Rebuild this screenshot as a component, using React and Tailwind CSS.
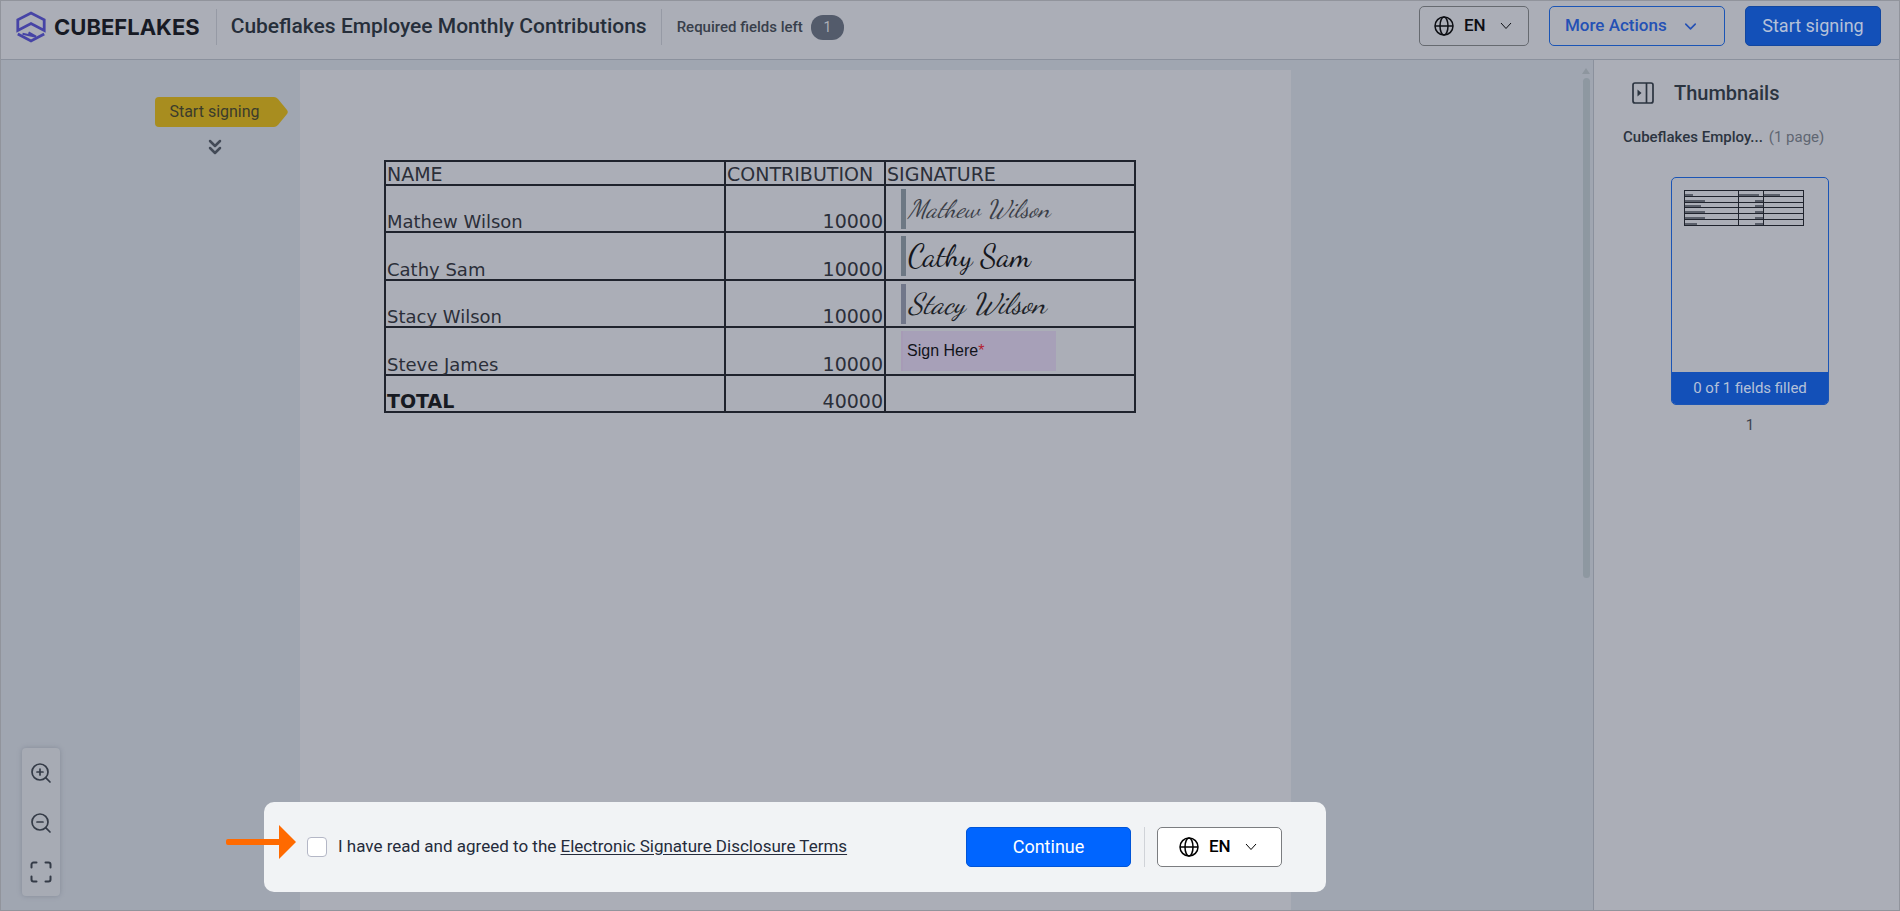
import { useState } from "react";
import { ChevronDown, ChevronsDown, ZoomIn, ZoomOut } from "lucide-react";

const rows = [
    { name: "Mathew Wilson", amount: 10000, sign: "Mathew Wilson", bar: "bg-[#6d7884]", font: "italic text-[25px] text-[#3a3d46]" },
    { name: "Cathy Sam", amount: 10000, sign: "Cathy Sam", bar: "bg-[#6d7884]", font: "text-[31px] text-[#14161c]" },
    { name: "Stacy Wilson", amount: 10000, sign: "Stacy Wilson", bar: "bg-[#71778a]", font: "italic text-[29px] text-[#1c1f26]" },
    { name: "Steve James", amount: 10000 },
];

const Logo = () => (
    <a href="#" className="flex items-center gap-2 text-[#171a24]">
        <svg width="30" height="32" viewBox="0 0 30 32" fill="none" stroke="#4644a6" strokeWidth="2.800">
            <path d="M1.800 19.500V8.800L15 2l13.200 6.800V19.500L15 12.500Z" />
            <path d="M1.800 23 15 30l13.200-7" />
            <path d="M6.500 22.800 20 25.800 12.500 21.500" strokeWidth="2.200" />
        </svg>
        <span className="font-['Inter',sans-serif] text-[22px] leading-8 font-bold">CUBEFLAKES</span>
    </a>
);

const Globe = () => (
    <svg width="20" height="20" viewBox="0 0 20 20" fill="none" stroke="currentColor" strokeWidth="1.5">
        <circle cx="10" cy="10" r="9" />
        <ellipse cx="10" cy="10" rx="4" ry="9" />
        <path d="M1 10h18" />
    </svg>
);

const LanguageButton = ({ className }) => (
    <button type="button" className={`flex h-10 items-center rounded-[5px] border text-[17px] font-medium ${className}`}>
        <Globe />
        <span className="ml-2.5">EN</span>
        <svg className="ml-3.5" width="12" height="8" viewBox="0 0 12 8" fill="none" stroke="currentColor" strokeWidth="1">
            <path d="m1 1 5 5.500L11 1" />
        </svg>
    </button>
);

const Header = () => (
    <header className="flex h-[59px] shrink-0 items-start justify-between border-b border-[#8b919d] bg-[#abaeb7] pt-[5px] pr-[18px] pl-[15px]">
        <div className="flex h-[42px] items-center">
            <Logo />
            <span className="ml-4 h-9 w-px bg-[#969aa5]" />
            <h1 className="ml-3.5 text-[21px] font-medium whitespace-nowrap text-[#262e3a]">
                Cubeflakes Employee Monthly Contributions
            </h1>
            <span className="ml-3.5 h-9 w-px bg-[#969aa5]" />
            <span className="ml-[15px] text-[15px] font-medium whitespace-nowrap text-[#383f4b]">Required fields left</span>
            <span className="ml-2 flex h-[25px] w-[33px] items-center justify-center rounded-xl bg-[#535b6b] text-sm text-[#abaeb7]">1</span>
        </div>

        <div className="flex gap-5">
            <LanguageButton className="w-[110px] border-[#666a70] pl-3.5 text-[#0d0f14]" />
            <button type="button" className="flex h-10 w-44 items-center rounded-[5px] border border-[#1b55b5] pl-[15px] text-[17px] font-medium text-[#2451b5]">
                More Actions
                <ChevronDown className="ml-3.5" size={19} strokeWidth={2} />
            </button>
            <button type="button" className="h-10 w-[136px] rounded-[5px] border border-[#1247a0] bg-[#1350b8] text-lg text-[#b5c1d8]">
                Start signing
            </button>
        </div>
    </header>
);

const ZoomTools = () => (
    <div className="ml-[21px] flex h-[148px] w-[38px] flex-col items-center justify-around rounded bg-[#a7abb4] text-[#343b47] shadow-[0_0_5px_#848b98]">
        <button type="button" aria-label="Zoom in"><ZoomIn size={24} strokeWidth={1.700} /></button>
        <button type="button" aria-label="Zoom out"><ZoomOut size={24} strokeWidth={1.700} /></button>
        <button type="button" aria-label="Fit to page">
            <svg width="22" height="22" viewBox="0 0 22 22" fill="none" stroke="currentColor" strokeWidth="2" strokeLinecap="round">
                <path d="M1.500 6.500v-3a2 2 0 0 1 2-2h3M15.500 1.500h3a2 2 0 0 1 2 2v3M20.500 15.500v3a2 2 0 0 1-2 2h-3M6.500 20.500h-3a2 2 0 0 1-2-2v-3" />
            </svg>
        </button>
    </div>
);

const SignatureCell = ({ row }) => {
    if (row.sign) {
        return (
            <div className="ml-[15px] flex h-10 items-center gap-0.5">
                <span className={`h-10 w-[5px] ${row.bar}`} />
                <span className={`font-['Dancing_Script','Liberation_Serif',cursive] leading-8 whitespace-nowrap ${row.font}`}>
                    {row.sign}
                </span>
            </div>
        );
    }
    return (
        <button type="button" className="ml-[15px] flex h-10 w-[155px] items-center border-l-2 border-[#a79bb6] bg-[#a7a0b8] pl-1 font-['Liberation_Sans',sans-serif] text-base text-[#11131a]">
            Sign Here<span className="text-[#b3202e]">*</span>
        </button>
    );
};

const ContributionTable = () => (
    <table className="w-full table-fixed border-collapse font-['DejaVu_Sans',sans-serif] text-[19px] leading-[19px] text-[#2b2f39]">
        <colgroup>
            <col className="w-[340px]" />
            <col className="w-40" />
            <col />
        </colgroup>
        <thead>
            <tr className="h-6 text-left">
                <th className="border-2 border-[#1f232d] px-px py-0 align-bottom font-normal">NAME</th>
                <th className="border-2 border-[#1f232d] px-px py-0 align-bottom font-normal">CONTRIBUTION</th>
                <th className="border-2 border-[#1f232d] px-px py-0 align-bottom font-normal">SIGNATURE</th>
            </tr>
        </thead>
        <tbody>
            {rows.map((row) => (
                <tr key={row.name} className="odd:h-[47px] even:h-12">
                    <td className="border-2 border-[#1f232d] px-px py-0 align-bottom text-lg leading-[19px]">{row.name}</td>
                    <td className="border-2 border-[#1f232d] px-px py-0 text-right align-bottom">{row.amount}</td>
                    <td className="border-2 border-[#1f232d] p-0 align-middle"><SignatureCell row={row} /></td>
                </tr>
            ))}
            <tr className="h-[37px]">
                <td className="border-2 border-[#1f232d] px-px py-0 align-bottom font-bold text-[#171a22]">TOTAL</td>
                <td className="border-2 border-[#1f232d] px-px py-0 text-right align-bottom">40000</td>
                <td className="border-2 border-[#1f232d] p-0" />
            </tr>
        </tbody>
    </table>
);

const ConsentBar = () => {
    const [agreed, setAgreed] = useState(false);

    return (
        <div className="absolute right-[267px] bottom-[18px] left-[263px] flex h-[90px] items-center justify-between rounded-[10px] bg-[#f1f3f5] pr-11 pl-[43px]">
            <svg className="absolute top-[23px] -left-[38px]" width="70" height="34" viewBox="0 0 70 34" fill="#ff6a00">
                <rect y="14" width="56" height="6" rx="2" />
                <path d="M53 0 70 17 53 34Z" />
            </svg>

            <div className="flex items-center text-[17px] text-[#252b3b]">
                <input
                    id="agree"
                    type="checkbox"
                    checked={agreed}
                    onChange={(e) => setAgreed(e.target.checked)}
                    className="size-5 appearance-none rounded border border-[#b4b7c6] bg-white checked:bg-[#0065ff]"
                />
                <label htmlFor="agree" className="ml-[11px] whitespace-pre">I have read and agreed to the </label>
                <a href="#" className="whitespace-nowrap underline underline-offset-2">Electronic Signature Disclosure Terms</a>
            </div>

            <div className="flex items-center">
                <button type="button" className="h-10 w-[165px] rounded-[5px] border border-[#0055d8] bg-[#0065ff] text-lg text-white">
                    Continue
                </button>
                <span className="ml-[13px] h-10 w-px bg-[#d0d3d8]" />
                <LanguageButton className="ml-3 w-[125px] border-[#7b7d80] bg-white pl-[21px] text-black" />
            </div>
        </div>
    );
};

// text marks in the small page preview, one row per table line
const preview = [
    ["w-2", "w-5", "w-4"],
    ["w-5", "w-2", ""],
    ["w-4", "w-2", ""],
    ["w-5", "w-2", ""],
    ["w-5", "w-2", ""],
    ["w-3", "w-2", ""],
];

const Thumbnails = () => (
    <aside className="flex w-[306px] shrink-0 flex-col border-l border-[#8b919d] bg-[#abaeb7]">
        <div className="mt-[19px] ml-[38px] flex items-center">
            <button type="button" aria-label="Hide thumbnails" className="text-[#2b3440]">
                <svg width="22" height="22" viewBox="0 0 22 22" fill="none" stroke="currentColor" strokeWidth="1.700">
                    <rect x="1" y="1" width="20" height="20" rx="2" />
                    <path d="M14.500 1v20" />
                    <path d="M5.500 7.500 9.500 11l-4 3.500Z" fill="currentColor" stroke="none" />
                </svg>
            </button>
            <h2 className="ml-5 text-xl leading-7 font-medium text-[#2b3440]">Thumbnails</h2>
        </div>

        <p className="mt-[18px] ml-[29px] flex gap-1.5 text-[15px] leading-6 text-[#5f6672]">
            <span className="font-medium whitespace-nowrap text-[#2b3440]">Cubeflakes Employ...</span>
            <span>(1 page)</span>
        </p>

        <button type="button" className="mt-7 mr-[70px] flex h-[228px] w-[158px] flex-col justify-between self-end overflow-hidden rounded-[5px] border border-[#1b55b5]">
            <span className="mt-3 ml-3 flex h-9 w-[120px] flex-col divide-y divide-[#1f232d] border border-[#1f232d]">
                {preview.map((line, i) => (
                    <span key={i} className="grid flex-1 grid-cols-[54px_25px_1fr] divide-x divide-[#1f232d]">
                        {line.map((w, j) => (
                            <span key={j} className={`flex items-end ${i > 0 && j === 1 ? "justify-end" : ""}`}>
                                <span className={`h-0.5 bg-[#5a5f6a] ${w}`} />
                            </span>
                        ))}
                    </span>
                ))}
            </span>
            <span className="flex h-8 w-full items-center justify-center bg-[#1350b8] text-[15px] text-[#b5c1d8]">
                0 of 1 fields filled
            </span>
        </button>
        <span className="mt-2 mr-[70px] w-[158px] self-end text-center text-[15px] leading-6 text-[#3d4450]">1</span>
    </aside>
);

export default function App() {
    return (
        <div className="flex h-screen min-w-[1600px] flex-col border border-[#91949c] bg-[#a0a6b1] font-['Roboto',sans-serif]">
            <Header />

            <div className="flex min-h-0 flex-1">
                <main className="relative grid min-w-0 flex-1 grid-cols-[1fr_991px_302px]">
                    <div className="flex flex-col justify-between pt-[37px] pb-3.5">
                        <div className="mr-3 flex flex-col self-end">
                            <button type="button" className="flex h-[30px] items-stretch text-base text-[#3b3c2c]">
                                <span className="flex w-[119px] items-center justify-center rounded-l bg-[#a88d1f]">Start signing</span>
                                <svg width="14" height="30" viewBox="0 0 14 30" fill="#a88d1f">
                                    <path d="M0 0q2 0 4 2l9 11q1.500 2 0 4L4 28q-2 2-4 2Z" />
                                </svg>
                            </button>
                            <div className="mt-2 flex w-[119px] justify-center text-[#434a57]">
                                <ChevronsDown size={24} strokeWidth={2.500} />
                            </div>
                        </div>
                        <ZoomTools />
                    </div>

                    <section className="mt-2.5 bg-[#abaeb7] px-[84px] pt-[90px]">
                        <div className="w-[752px]">
                            <ContributionTable />
                        </div>
                    </section>

                    <div className="flex flex-col items-end pt-2 pr-[3px]">
                        <svg width="8" height="6" viewBox="0 0 8 6" fill="#8e969f"><path d="M4 0 8 6H0Z" /></svg>
                        <span className="mt-1 h-[500px] w-[7px] rounded-sm bg-[#8e98a1]" />
                    </div>

                    <ConsentBar />
                </main>

                <Thumbnails />
            </div>
        </div>
    );
}
